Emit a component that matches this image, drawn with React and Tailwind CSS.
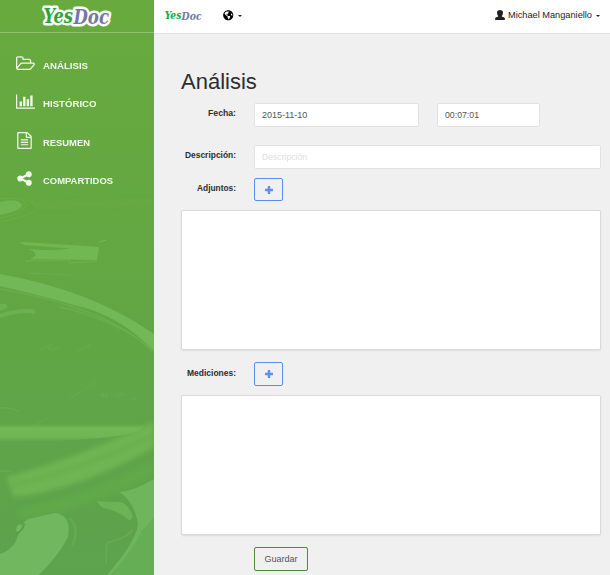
import React from "react";
import { FaGlobeAmericas } from "react-icons/fa";

const FOLDER =
  "M1781 803q0-35-53-35h-1088q-40 0-85.500 21.500t-71.500 52.500l-294 363q-18 24-18 40q0 35 53 35h1088q40 0 86-22t71-53l294-363q18-22 18-39zM640 640h768v-160q0-40-28-68t-68-28h-576q-40 0-68-28t-28-68v-64q0-40-28-68t-68-28h-320q-40 0-68 28t-28 68v853l256-315q44-53 116-87.500t140-34.500zM1909 803q0 62-46 120l-295 363q-43 53-116 87.500t-140 34.500h-1088q-92 0-158-66t-66-158v-960q0-92 66-158t158-66h320q92 0 158 66t66 158v32h544q92 0 158 66t66 158v160h192q54 0 99 24.500t67 70.500q15 32 15 68z";
const CHART =
  "M640 896v512h-256v-512h256zm384-512v1024h-256v-1024h256zm1024 1152v128h-2048v-1536h128v1408h1920zm-640-896v768h-256v-768h256zm384-384v1152h-256v-1152h256z";
const FILE =
  "M1596 380q28 28 48 76t20 88v1152q0 40-28 68t-68 28h-1344q-40 0-68-28t-28-68v-1600q0-40 28-68t68-28h896q40 0 88 20t76 48zm-444-244v376h376q-10-29-22-41l-313-313q-12-12-41-22zm384 1528v-1024h-416q-40 0-68-28t-28-68v-416h-768v1536h1280zm-1024-864q0-14 9-23t23-9h704q14 0 23 9t9 23v64q0 14-9 23t-23 9h-704q-14 0-23-9t-9-23v-64zm736 224q14 0 23 9t9 23v64q0 14-9 23t-23 9h-704q-14 0-23-9t-9-23v-64q0-14 9-23t23-9h704zm0 256q14 0 23 9t9 23v64q0 14-9 23t-23 9h-704q-14 0-23-9t-9-23v-64q0-14 9-23t23-9h704z";
const SHARE =
  "M1344 1024q133 0 226.500 93.500t93.500 226.500-93.500 226.500-226.500 93.500-226.500-93.500-93.500-226.500q0-12 2-34l-360-180q-92 86-218 86-133 0-226.500-93.500t-93.500-226.500 93.500-226.500 226.500-93.500q126 0 218 86l360-180q-2-22-2-34 0-133 93.500-226.500t226.500-93.500 226.500 93.500 93.500 226.500-93.500 226.500-226.500 93.500q-126 0-218-86l-360 180q2 22 2 34t-2 34l360 180q92-86 218-86z";

const NAV = [
  { label: "ANÁLISIS", path: FOLDER, box: "0 0 1920 1792", icon: "mt-[3px] mr-px w-[19px] h-[18px]", width: 45 },
  { label: "HISTÓRICO", path: CHART, box: "0 0 2048 1792", icon: "w-[19px] h-[17px]", width: 53.5 },
  { label: "RESUMEN", path: FILE, box: "0 0 1792 1792", icon: "mr-[2px] w-[17px] h-[17px]", width: 47 },
  { label: "COMPARTIDOS", path: SHARE, box: "0 0 1792 1792", icon: "mr-[2px] w-[17px] h-[17px]", width: 70 },
];

function Logo({ className, outlined }) {
  const stroke = outlined
    ? { stroke: "#fff", strokeWidth: 5, strokeLinejoin: "round", paintOrder: "stroke" }
    : {};
  return (
    <svg
      viewBox="0 0 70 24"
      className={className}
      fontFamily="'DejaVu Serif Condensed', 'DejaVu Serif', serif"
      fontWeight="bold"
      fontStyle="italic"
    >
      <text x="32.500" y="20" fontSize="19.500" textLength="35.500" lengthAdjust="spacingAndGlyphs" fill="#74799f" {...stroke}>
        Doc
      </text>
      <text x="2.500" y="18.500" fontSize="20.500" textLength="29.500" lengthAdjust="spacingAndGlyphs" fill={outlined ? "#2fa336" : "#12ab4b"} {...stroke}>
        Yes
      </text>
    </svg>
  );
}

function Backdrop() {
  return (
    <svg viewBox="0 0 154 575" className="absolute inset-0 h-full w-full">
      <defs>
        <linearGradient id="base" x1="0" y1="0" x2="0" y2="1">
          <stop offset="0" stopColor="#68aa3e" />
          <stop offset="0.5" stopColor="#62a743" />
          <stop offset="1" stopColor="#5da24d" />
        </linearGradient>
        <linearGradient id="tube" x1="0" y1="0" x2="0" y2="1">
          <stop offset="0" stopColor="#72b850" stopOpacity="0" />
          <stop offset="0.25" stopColor="#72b857" />
          <stop offset="0.7" stopColor="#70b657" />
          <stop offset="1" stopColor="#72b850" stopOpacity="0" />
        </linearGradient>
        <filter id="soft" x="-20%" y="-20%" width="140%" height="140%">
          <feGaussianBlur stdDeviation="0.6" />
        </filter>
        <filter id="softer" x="-20%" y="-50%" width="140%" height="200%">
          <feGaussianBlur stdDeviation="2.500" />
        </filter>
      </defs>
      <rect width="154" height="575" fill="url(#base)" />
      <g filter="url(#softer)">
        <path d="M30 203L154 201V205L40 207Z" fill="#6bae46" opacity=".5" />
        <path d="M6 477Q70 461 154 422V447Q80 490 14 497Z" fill="#6fb553" />
        <path d="M12 485Q80 470 154 435" stroke="#66ab48" strokeWidth="3" fill="none" />
        <path d="M15 510Q90 494 154 460V475Q90 510 20 519Z" fill="#62a849" />
      </g>
      <g filter="url(#soft)">
        <path d="M0 202Q19 198 22 205Q21 211 0 215Z" fill="#70b652" />
        <path d="M0 199Q26 196 26 205Q24 214 0 218M0 222Q36 215 37 207Q36 202 27 200" stroke="#6db34e" strokeWidth="1" fill="none" opacity=".6" />
        <path d="M20 242L73 245L99 247V250L65 248L24 245Z" fill="#6fb750" />
        <path d="M28 249Q60 252 75 247L99 247L97 260L30 259Q42 254 28 249Z" fill="#71b852" />
        <path d="M99 242L106 240" stroke="#75b856" />
        <path d="M25 261L70 260V263L97 261" stroke="#6cb14c" strokeWidth="2" fill="none" opacity=".7" />
        <path d="M28 273L73 275" stroke="#69ae49" strokeWidth="1" />
        <path d="M0 274Q91 290 154 334V351Q118 314 74 305Q35 294 0 286Z" fill="#72b857" />
        <path d="M0 289Q110 308 153 352M60 307Q115 319 153 350" stroke="#69ae4e" strokeWidth="1.500" fill="none" />
        <path d="M0 304Q8 302 7 308L0 311Z" fill="#6bb150" />
        <path d="M0 316Q22 309 35 312" stroke="#6cb151" strokeWidth="4" fill="none" />
        <path d="M2 319L33 314" stroke="#61a743" strokeWidth="2" strokeDasharray="1 1" />
        <path d="M35 425L53 414M67 401L98 380M40 350L52 344L48 350L61 348M75 353L90 344L88 351" stroke="#6aaf4d" fill="none" opacity=".65" />
        <path d="M101 394Q110 393 107 396Q101 397 101 394M114 397L116 393M117 397L120 393L125 395M130 399Q139 398 138 402" stroke="#70b155" strokeWidth="1" fill="none" opacity=".65" />
        <path d="M0 424H144L143 428Q130 441 0 442Z" fill="url(#tube)" />
        <path d="M0 408Q12 407 19 412M0 471L12 471" stroke="#69af4d" strokeWidth="2" fill="none" opacity=".5" />
        <path d="M154 479Q134 491 119 492Q135 502 138 525Q135 543 107 575H154Z" fill="#6eb55c" />
        <path d="M141 532L154 517V550Q145 548 141 532ZM140 534L154 551V575H110Q132 552 140 534Z" fill="#65ae57" />
        <path d="M97 501Q108 502 119 502Q126 502 132 514Q133 520 129 520Q117 510 103 508Q99 505 97 501Z" fill="#6cb359" />
        <path d="M28 519L55 513Q72 515 68 537Q60 554 39 575H0V554Q15 549 18 535Q23 529 23 523Z" fill="#71b75f" />
        <path d="M70 518Q80 530 72 546" stroke="#68ae54" strokeWidth="3" fill="none" opacity=".6" />
        <ellipse cx="19" cy="528" rx="2.500" ry="4" transform="rotate(25 19 528)" fill="#73b85f" />
        <path d="M24 523Q25 529 16 534" stroke="#58a047" strokeWidth="1.500" fill="none" />
        <path d="M132 530Q129 537 107 543Q106 555 106 563" stroke="#65aa50" strokeWidth="2" fill="none" />
      </g>
    </svg>
  );
}

function Caret() {
  return <span className="h-0 w-0 border-x-2 border-t-2 border-x-transparent border-t-[#222]" />;
}

function Label({ children, width }) {
  return (
    <div className="flex w-[55px] justify-end">
      <svg className="h-3 overflow-visible" style={{ width }}>
        <text x="0" y="9" fontSize="8.800" fontWeight="bold" fill="#2d2d2d" textLength={width} lengthAdjust="spacingAndGlyphs">
          {children}
        </text>
      </svg>
    </div>
  );
}

function AddButton({ className }) {
  return (
    <button className={`ml-[18px] flex w-[29px] items-center justify-center rounded-[2px] border border-[#5a8dee] ${className}`}>
      <svg viewBox="0 0 8 8" className="ml-px h-2 w-2">
        <path d="M2.800 0H5.200V2.800H8V5.200H5.200V8H2.800V5.200H0V2.800H2.800Z" fill="#5b8ff5" />
      </svg>
    </button>
  );
}

const field = "flex h-6 items-center rounded-[2px] border border-[#e2e2e2] bg-white pt-px pl-[7px] text-[9px] text-[#555]";
const panel = "h-[140px] w-[420px] rounded-[2px] border border-[#dadada] bg-white shadow-[0_1px_2px_rgba(0,0,0,0.08)]";

export default function App() {
  return (
    <div className="flex h-[575px] w-[610px] overflow-hidden bg-[#f0f0f0] font-['Liberation_Sans',Arial,sans-serif]">
      <aside className="relative h-full w-[154px] shrink-0 overflow-hidden">
        <Backdrop />
        <div className="relative flex h-[33px] border-b border-[#91c170] pt-1 pl-[41px]">
          <Logo className="h-6 w-[70px] overflow-visible" outlined />
        </div>
        <nav className="relative flex flex-col pt-[11px]">
          {NAV.map((item) => (
            <a key={item.label} className="flex h-[38.500px] items-center pl-4">
              <span className="flex w-[19px] shrink-0 justify-center">
                <svg viewBox={item.box} className={`shrink-0 ${item.icon}`} fill="#f1f8ec">
                  <path d={item.path} />
                </svg>
              </span>
              <svg className="mt-[3px] ml-2 h-3 overflow-visible" style={{ width: item.width }}>
                <text x="0" y="9.500" fontSize="9.500" fontWeight="bold" fill="#f1f8ec" textLength={item.width} lengthAdjust="spacingAndGlyphs">
                  {item.label}
                </text>
              </svg>
            </a>
          ))}
        </nav>
      </aside>
      <main className="flex min-w-0 flex-1 flex-col">
        <header className="flex h-[34px] shrink-0 items-start border-b border-[#e1e1e1] bg-white pl-[9px] text-[#222]">
          <Logo className="mt-[9px] h-[13.500px] w-[40px] overflow-visible" />
          <FaGlobeAmericas className="mt-[10px] ml-5 h-[10.500px] w-[10.500px] text-black" />
          <span className="mt-[15px] ml-[4.500px] flex"><Caret /></span>
          <span className="ml-auto flex pr-[10px]">
            <svg viewBox="0 0 10 10" className="mt-[10px] h-[10px] w-[10px]" fill="#222">
              <path d="M5 0Q8 0 8 2.800Q7.900 5 6.800 5.900V6.500L9.300 7.400Q10 7.900 10 9.300Q10 10 9.300 10H.7Q0 10 0 9.300Q0 7.900 .7 7.400L3.200 6.500V5.900Q2.100 5 2 2.800Q2 0 5 0Z" />
            </svg>
            <svg className="mt-[9px] ml-[3px] h-3 w-[84px] overflow-visible">
              <text x="0" y="9" fontSize="9.500" fill="#222" textLength="84" lengthAdjust="spacingAndGlyphs">Michael Manganiello</text>
            </svg>
            <span className="mt-[15px] ml-[4px] flex"><Caret /></span>
          </span>
        </header>
        <div className="pl-[27px]">
          <h1 className="mt-[35px] h-[34px] text-[22px] leading-[26px] text-[#2d2d2d]">Análisis</h1>
          <div className="flex">
            <div className="pt-1"><Label width={28}>Fecha:</Label></div>
            <div className={`${field} ml-[18px] w-[165px]`}>2015-11-10</div>
            <div className={`${field} ml-[18px] w-[103px]`}>
              <span className="inline-block origin-left scale-x-[0.97]">00:07:01</span>
            </div>
          </div>
          <div className="mt-[18px] flex">
            <div className="pt-1"><Label width={51}>Descripción:</Label></div>
            <div className={`${field} ml-[18px] w-[347px]`}>
              <span className="inline-block origin-left scale-x-[0.96] text-[#e0e0e0]">Descripción</span>
            </div>
          </div>
          <div className="mt-[9px] flex h-6">
            <div className="pt-1"><Label width={39}>Adjuntos:</Label></div>
            <AddButton className="h-[23px]" />
          </div>
          <div className={`${panel} mt-2`} />
          <div className="mt-3 flex">
            <div className="pt-[5px]"><Label width={49}>Mediciones:</Label></div>
            <AddButton className="h-6" />
          </div>
          <div className={`${panel} mt-[9px]`} />
          <button className="mt-3 ml-[73px] flex h-6 w-[54px] items-center justify-center rounded-[2px] border border-[#4c8a36] pt-px text-[9px] text-[#555]">
            Guardar
          </button>
        </div>
      </main>
    </div>
  );
}
